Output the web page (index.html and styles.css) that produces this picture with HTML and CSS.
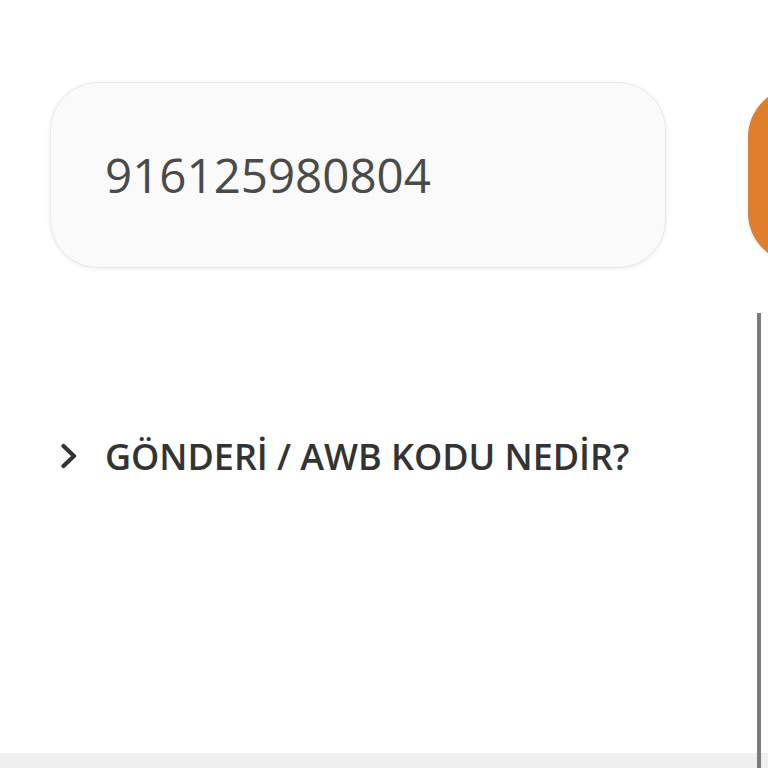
FILE: index.html
```html
<!DOCTYPE html>
<html lang="tr">
<head>
<meta charset="utf-8">
<link rel="stylesheet" href="styles.css">
</head>
<body>
<div class="page">
  <div class="search-row">
    <div class="input-box"><span class="input-value">916125980804</span></div>
    <div class="search-btn"></div>
  </div>
  <div class="content">
    <div class="faq">
      <svg class="chevron" width="17" height="26" viewBox="0 0 17 26"><path d="M2.5 3 L13 13 L2.5 23" fill="none" stroke="#333" stroke-width="4.2" stroke-linecap="round" stroke-linejoin="round"/></svg>
      <span class="faq-title">GÖNDERİ / AWB KODU NEDİR?</span>
    </div>
    <div class="divider"></div>
  </div>
  <div class="footer-band"></div>
</div>
</body>
</html>
```
FILE: styles.css
```css
html, body {
  margin: 0;
  padding: 0;
  background: #ffffff;
  overflow: hidden;
}
.page {
  width: 768px;
  height: 768px;
  display: flex;
  flex-direction: column;
  overflow: hidden;
  font-family: "Open Sans", "Noto Sans", sans-serif;
}
.search-row {
  display: flex;
  align-items: center;
  gap: 82px;
  padding: 81px 0 0 50px;
  height: 187px;
}
.input-box {
  flex: 0 0 616px;
  height: 186px;
  box-sizing: border-box;
  background: #fafafa;
  border: 1px solid #e8e8e8;
  border-radius: 48px;
  box-shadow: 0 1px 4px rgba(0,0,0,0.08);
  display: flex;
  align-items: center;
  padding-left: 54px;
}
.input-value {
  font-size: 47.5px;
  color: #4a4a4a;
}
.search-btn {
  flex: 0 0 120px;
  height: 176px;
  background: #e07f2b;
  border-radius: 50px;
  box-shadow: 0 1px 4px rgba(0,0,0,0.1);
}
.content {
  flex: 1;
  display: flex;
  position: relative;
}
.faq {
  display: flex;
  align-items: center;
  gap: 27px;
  padding: 168px 0 0 61px;
  height: 40px;
}
.chevron {
  flex: none;
}
.faq-title {
  font-size: 36px;
  font-weight: 600;
  color: #333333;
  letter-spacing: -0.05px;
}
.divider {
  position: absolute;
  left: 757px;
  top: 45px;
  bottom: -20px;
  width: 4px;
  background: #7a7a7a;
}
.footer-band {
  height: 15px;
  background: #f0f0f0;
}
```
